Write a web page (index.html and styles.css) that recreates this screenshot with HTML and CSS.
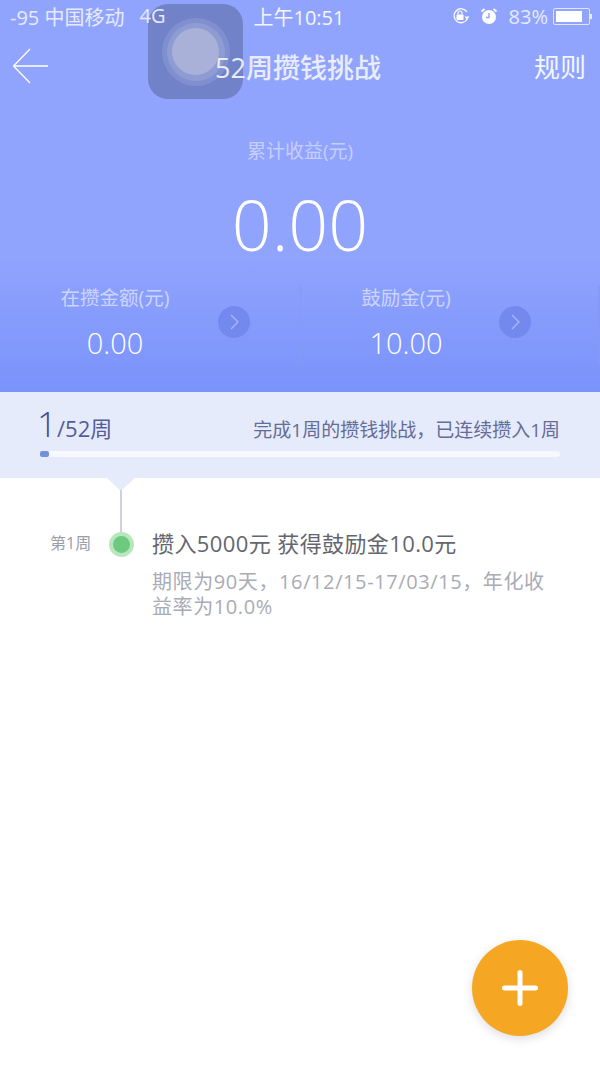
FILE: index.html
```html
<!DOCTYPE html>
<html lang="en">
    <head>
        <meta charset="utf-8" />
        <title>52周攒钱挑战</title>
        <link rel="stylesheet" href="styles.css">
    </head>
    <body>
        <div id="page">
            <div class="hero">
                <!-- touch button sits under the bar texts -->
                <div class="touch-btn">
                    <div class="touch-outer"><div class="touch-mid"><div class="touch-inner"></div></div></div>
                </div>
                <div class="statusbar">
                    <div class="status-left">
                        <span>-95 中国移动</span>
                        <span>4G</span>
                    </div>
                    <div class="status-time">上午10:51</div>
                    <div class="status-right">
                        <svg class="status-icon" viewBox="0 0 20 18">
                            <path d="M16.500 11.500A7 7 0 1 1 16 5" fill="none" stroke="#fff" stroke-width="1.300" />
                            <path d="M13.500 9.500h5l-2.500 3z" fill="#fff" />
                            <rect x="5.500" y="7.500" width="7" height="5.500" rx="1" fill="#fff" />
                            <path d="M7 7.500V6a2 2 0 0 1 4 0v1.500" fill="none" stroke="#fff" stroke-width="1.200" />
                        </svg>
                        <svg class="status-icon" viewBox="0 0 20 18">
                            <circle cx="10" cy="10" r="7" fill="#fff" />
                            <path d="M10 6v4.500H7" fill="none" stroke="#8f9ff0" stroke-width="1.300" />
                            <path d="M2.500 4.500l3-2.500M17.500 4.500l-3-2.500" stroke="#fff" stroke-width="1.800" />
                        </svg>
                        <span class="battery-text">83%</span>
                        <div class="battery"><div class="battery-fill"></div></div>
                        <div class="battery-tip"></div>
                    </div>
                </div>
                <div class="navbar">
                    <svg class="back" viewBox="0 0 36 36">
                        <path d="M36 18H2M18 1L1.500 18L18 35" fill="none" stroke="#fff" stroke-width="1.300" />
                    </svg>
                    <div class="nav-title">52周攒钱挑战</div>
                    <div class="nav-rule">规则</div>
                </div>
                <div class="total-label">累计收益(元)</div>
                <div class="total-value">0.00</div>
                <div class="stats">
                    <div class="stat">
                        <div class="stat-text">
                            <div class="stat-label">在攒金额(元)</div>
                            <div class="stat-value">0.00</div>
                        </div>
                        <div class="stat-arrow">
                            <svg viewBox="0 0 32 32"><path d="M13 9l7 7-7 7" fill="none" stroke="#a9b8fb" stroke-width="1.300" /></svg>
                        </div>
                    </div>
                    <div class="stat stat-second">
                        <div class="stat-text">
                            <div class="stat-label">鼓励金(元)</div>
                            <div class="stat-value">10.00</div>
                        </div>
                        <div class="stat-arrow">
                            <svg viewBox="0 0 32 32"><path d="M13 9l7 7-7 7" fill="none" stroke="#a9b8fb" stroke-width="1.300" /></svg>
                        </div>
                    </div>
                </div>
            </div>

            <div class="progress">
                <div class="progress-top">
                    <div class="progress-count"><span class="progress-num">1</span>/52周</div>
                    <div class="progress-note">完成1周的攒钱挑战，已连续攒入1周</div>
                </div>
                <div class="progress-track"><div class="progress-bar"></div></div>
            </div>

            <div class="timeline">
                <div class="pointer"></div>
                <div class="line"></div>
                <div class="week">
                    <div class="week-name">第1周</div>
                    <div class="week-dot"></div>
                    <div class="week-body">
                        <div class="week-title">攒入5000元 获得鼓励金10.0元</div>
                        <div class="week-desc">期限为90天，16/12/15-17/03/15，年化收益率为10.0%</div>
                    </div>
                </div>
            </div>

            <div class="fab">
                <svg viewBox="0 0 36 36"><path d="M18 2.500V33.500M2.500 18H33.500" stroke="#fff" stroke-width="5" stroke-linecap="round" /></svg>
            </div>
        </div>
    </body>
</html>
```

FILE: styles.css
```css
* {
    box-sizing: border-box;
}
body {
    margin: 0;
    background-color: #fff;
    font-family: "Open Sans", "Noto Sans CJK SC", sans-serif;
}
#page {
    position: relative;
    width: 600px;
    height: 1068px;
    overflow: hidden;
    background-color: #fff;
}
.hero {
    position: relative;
    height: 392px;
    color: #fff;
    background: linear-gradient(#91a4fd 0, #91a4fd 250px, #7a93fb 392px);
}
.statusbar {
    position: relative;
    display: flex;
    align-items: center;
    justify-content: space-between;
    height: 34px;
    padding: 0 8px 2px 10px;
    font-size: 20px;
    color: #e6eaff;
}
.status-left {
    display: flex;
    gap: 15px;
    width: 200px;
    white-space: nowrap;
}
.status-time {
    margin-left: -4px;
    font-size: 20px;
    color: #f4f6ff;
}
.status-right {
    display: flex;
    align-items: center;
    justify-content: flex-end;
    width: 200px;
}
.status-icon {
    width: 20px;
    height: 18px;
    margin-right: 8px;
}
.battery-text {
    margin: 0 5px 0 2px;
}
.battery {
    width: 37px;
    height: 17px;
    padding: 2px;
    border: 1px solid #dfe4ff;
    border-radius: 2px;
}
.battery-fill {
    width: 83%;
    height: 100%;
    background-color: #fff;
}
.battery-tip {
    width: 2px;
    height: 5px;
    background-color: #e6eaff;
}
.navbar {
    position: relative;
    display: flex;
    align-items: center;
    justify-content: space-between;
    height: 64px;
    padding: 0 14px 0 12px;
}
.back {
    width: 36px;
    height: 36px;
}
.nav-title {
    margin-left: 14px;
    font-size: 27px;
    font-weight: 500;
    color: #e9ecfa;
}
.nav-rule {
    font-size: 26px;
    color: #f4f6ff;
}
.total-label {
    margin-top: 39px;
    font-size: 19px;
    line-height: 28px;
    text-align: center;
    color: #c5cffd;
}
.total-value {
    margin-top: 23px;
    font-size: 70px;
    font-weight: 300;
    line-height: 72px;
    text-align: center;
}
.stats {
    display: flex;
    margin-top: 25px;
}
.stat {
    display: flex;
    align-items: center;
    width: 300px;
    height: 78px;
    padding-left: 30px;
}
.stat-second {
    padding-left: 29px;
    border-left: 1px solid #8599f6;
    border-right: 2px solid #8599f6;
}
.stat-text {
    width: 170px;
    text-align: center;
}
.stat-second .stat-text {
    width: 152px;
}
.stat-label {
    font-size: 19.500px;
    line-height: 26px;
    color: #ccd5fe;
}
.stat-value {
    margin-top: 12px;
    font-size: 29px;
    font-weight: 300;
    line-height: 40px;
}
.stat-arrow {
    width: 32px;
    height: 32px;
    margin: -4px 0 0 18px;
    border-radius: 50%;
    background-color: #7389ee;
}
.stat-second .stat-arrow {
    margin-left: 17px;
}
.progress {
    position: relative;
    height: 86px;
    padding: 15px 40px 0;
    background-color: #e5ebfb;
}
.progress-top {
    display: flex;
    align-items: flex-end;
    justify-content: space-between;
    height: 36px;
}
.progress-count {
    font-size: 22px;
    line-height: 30px;
    color: #555d96;
}
.progress-num {
    margin-left: -3px;
    font-size: 35px;
    font-weight: 300;
    color: #434b8a;
}
.progress-note {
    font-size: 19px;
    line-height: 26px;
    color: #656c97;
}
.progress-track {
    height: 6px;
    margin-top: 8px;
    border-radius: 3px;
    background-color: #f6f8fe;
}
.progress-bar {
    width: 9px;
    height: 100%;
    border-radius: 2px;
    background-color: #7590da;
}
.timeline {
    position: relative;
    padding-top: 50px;
}
.pointer {
    position: absolute;
    top: 0;
    left: 107px;
    width: 0;
    height: 0;
    border-left: 14px solid transparent;
    border-right: 14px solid transparent;
    border-top: 13px solid #e5ebfb;
}
.line {
    position: absolute;
    top: 12px;
    left: 120px;
    width: 2px;
    height: 42px;
    background-color: #cfd2de;
}
.week {
    display: flex;
}
.week-name {
    width: 109px;
    padding: 2px 0 0 50px;
    font-size: 16px;
    line-height: 26px;
    color: #9b9ea8;
}
.week-dot {
    width: 25px;
    height: 25px;
    margin-top: 4px;
    border: 4px solid #b7e7bd;
    border-radius: 50%;
    background-color: #6cc97d;
}
.week-body {
    width: 408px;
    margin-left: 18px;
}
.week-title {
    margin-top: -1px;
    font-size: 22px;
    letter-spacing: 0.400px;
    line-height: 32px;
    color: #64666f;
}
.week-desc {
    margin-top: 10px;
    font-size: 20px;
    letter-spacing: 0.600px;
    line-height: 25px;
    color: #a9abb6;
}
.touch-btn {
    position: absolute;
    top: 4px;
    left: 148px;
    display: flex;
    align-items: center;
    justify-content: center;
    width: 95px;
    height: 95px;
    border-radius: 20px;
    background-color: #7282c9;
}
.touch-outer {
    display: flex;
    align-items: center;
    justify-content: center;
    width: 68px;
    height: 68px;
    border-radius: 50%;
    background-color: #808fd0;
}
.touch-mid {
    display: flex;
    align-items: center;
    justify-content: center;
    width: 58px;
    height: 58px;
    border-radius: 50%;
    background-color: #8f9cd4;
}
.touch-inner {
    width: 47px;
    height: 47px;
    border-radius: 50%;
    background-color: #a9b1d9;
}
.fab {
    position: absolute;
    top: 940px;
    left: 472px;
    display: flex;
    align-items: center;
    justify-content: center;
    width: 96px;
    height: 96px;
    border-radius: 50%;
    background-color: #f5a623;
    box-shadow: 0 3px 10px rgba(90, 90, 110, 0.2);
}
.fab svg {
    width: 36px;
    height: 36px;
}
```
